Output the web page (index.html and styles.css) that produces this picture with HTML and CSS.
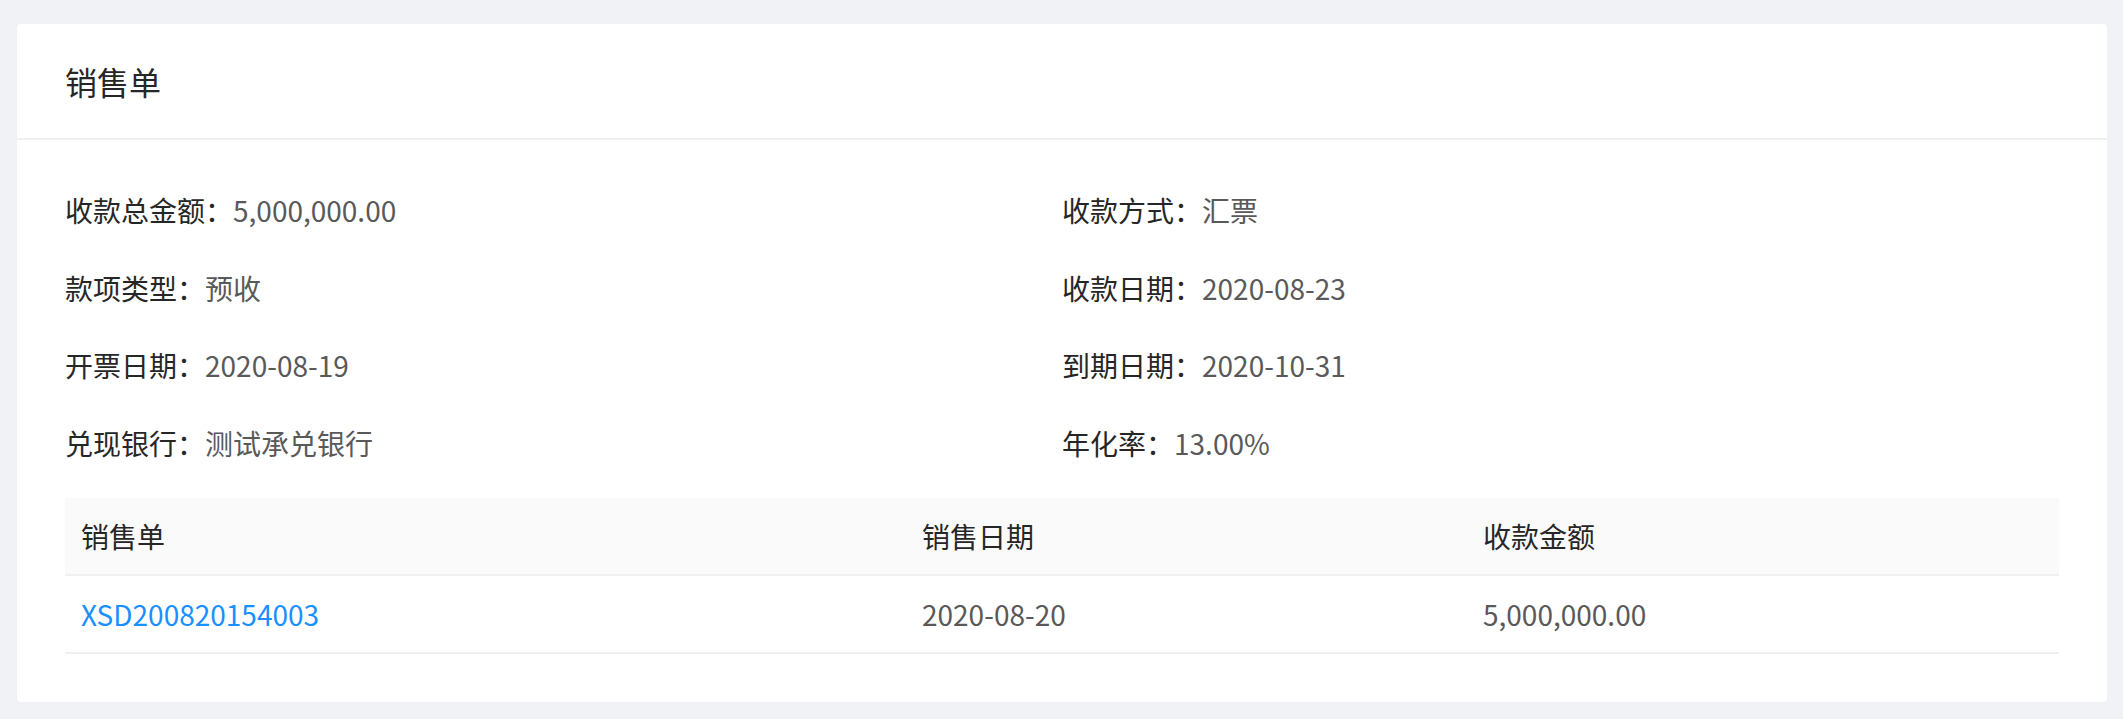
FILE: index.html
```html
<!DOCTYPE html>
<html lang="zh-CN">
<head>
<meta charset="utf-8">
<title>销售单</title>
<link rel="stylesheet" href="styles.css">
</head>
<body>
<div class="card">
  <div class="card-head">
    <div class="card-title">销售单</div>
  </div>
  <div class="card-body">
    <div class="desc">
      <div class="item"><span class="label">收款总金额：</span><span class="value">5,000,000.00</span></div>
      <div class="item"><span class="label">收款方式：</span><span class="value">汇票</span></div>
      <div class="item"><span class="label">款项类型：</span><span class="value">预收</span></div>
      <div class="item"><span class="label">收款日期：</span><span class="value">2020-08-23</span></div>
      <div class="item"><span class="label">开票日期：</span><span class="value">2020-08-19</span></div>
      <div class="item"><span class="label">到期日期：</span><span class="value">2020-10-31</span></div>
      <div class="item"><span class="label">兑现银行：</span><span class="value">测试承兑银行</span></div>
      <div class="item"><span class="label">年化率：</span><span class="value">13.00%</span></div>
    </div>
    <table class="table">
      <colgroup>
        <col class="c1"><col class="c2"><col class="c3">
      </colgroup>
      <thead>
        <tr><th>销售单</th><th>销售日期</th><th>收款金额</th></tr>
      </thead>
      <tbody>
        <tr><td><a class="link" href="#">XSD200820154003</a></td><td>2020-08-20</td><td>5,000,000.00</td></tr>
      </tbody>
    </table>
  </div>
</div>
</body>
</html>
```
FILE: styles.css
```css
html, body {
  margin: 0;
  padding: 0;
}
body {
  background: #f0f2f5;
  padding: 24px 16px 17px 17px;
  font-family: "Noto Sans CJK SC", "Microsoft YaHei", sans-serif;
  color: #262626;
}
.card {
  background: #fff;
  border-radius: 4px;
}
.card-head {
  padding: 0 48px;
  border-bottom: 2px solid #f0f0f0;
}
.card-title {
  font-size: 32px;
  line-height: 48px;
  padding: 33px 0;
  color: #262626;
}
.card-body {
  padding: 48px;
}
.desc {
  display: grid;
  grid-template-columns: 1fr 1fr;
}
.item {
  font-size: 28px;
  line-height: 45.5px;
  padding-bottom: 32px;
}
.label {
  color: #262626;
}
.value {
  color: #595959;
}
.num {
  letter-spacing: -0.5px;
}
.table {
  width: 100%;
  border-collapse: collapse;
  table-layout: fixed;
  font-size: 28px;
}
.c1 { width: 841px; }
.c2 { width: 561px; }
.c3 { width: auto; }
.table th {
  background: #fafafa;
  font-weight: normal;
  text-align: left;
  color: #262626;
  padding: 16px;
  line-height: 44px;
  border-bottom: 2px solid #f0f0f0;
}
.table td {
  color: #595959;
  padding: 16px;
  line-height: 44px;
  border-bottom: 2px solid #f0f0f0;
}
.link {
  color: #1890ff;
  text-decoration: none;
}
```
